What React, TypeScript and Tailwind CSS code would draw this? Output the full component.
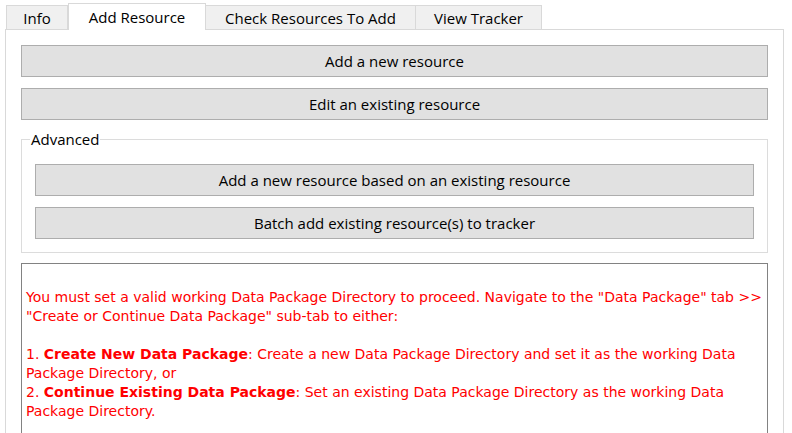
const tabs = ["Info", "Add Resource", "Check Resources To Add", "View Tracker"];

function Btn({ label }: { label: string }) {
  return (
    <button className="h-[32px] w-full border border-[#adadad] bg-[#e1e1e1] text-[15px] text-black">
      {label}
    </button>
  );
}

export default function App() {
  return (
    <div className="relative h-[433px] w-[792px] overflow-hidden bg-white font-['Open_Sans',sans-serif] text-black">
      {/* tab bar */}
      <div className="flex h-[29px] items-end pl-[6px]">
        {tabs.map((t, i) =>
          i === 1 ? (
            <div
              key={t}
              className="relative z-10 -mb-px flex h-[27px] w-[138px] items-start justify-center border border-b-0 border-[#d9d9d9] bg-white pt-[2px] text-[15px]"
            >
              {t}
            </div>
          ) : (
            <div
              key={t}
              className={`flex h-[24px] items-start justify-center border border-b-0 border-[#d9d9d9] bg-[#f0f0f0] pt-[1px] text-[15px] ${
                i === 0 ? "w-[62px]" : i === 2 ? "-ml-px w-[211px]" : "-ml-px w-[127px]"
              }`}
            >
              {t}
            </div>
          )
        )}
      </div>

      {/* pane */}
      <div className="ml-[5px] h-[420px] w-[779px] border border-[#d9d9d9] bg-white px-[15px] pt-[15px]">
        <div className="flex flex-col gap-[11px]">
          <Btn label="Add a new resource" />
          <Btn label="Edit an existing resource" />
        </div>

        {/* Advanced group */}
        <div className="relative mt-[19px] flex h-[114px] flex-col gap-[11px] border border-[#dcdcdc] px-[13px] pt-[24px]">
          <span className="absolute left-[8px] top-[-11px] bg-white px-[1px] text-[15px] leading-[20px]">
            Advanced
          </span>
          <Btn label="Add a new resource based on an existing resource" />
          <Btn label="Batch add existing resource(s) to tracker" />
        </div>

        {/* message box */}
        <div className="mt-[10px] h-[200px] whitespace-nowrap border border-[#828282] px-[4px] pt-[24px] font-['DejaVu_Sans',sans-serif] text-[14px] leading-[19px] text-[#ff0000]">
          <p>
            You must set a valid working Data Package Directory to proceed. Navigate to the "Data Package" tab &gt;&gt;
            <br />
            "Create or Continue Data Package" sub-tab to either:
          </p>
          <p className="mt-[19px]">
            1. <b>Create New Data Package</b>: Create a new Data Package Directory and set it as the working Data
            <br />
            Package Directory, or
            <br />
            2. <b>Continue Existing Data Package</b>: Set an existing Data Package Directory as the working Data
            <br />
            Package Directory.
          </p>
        </div>
      </div>
    </div>
  );
}
